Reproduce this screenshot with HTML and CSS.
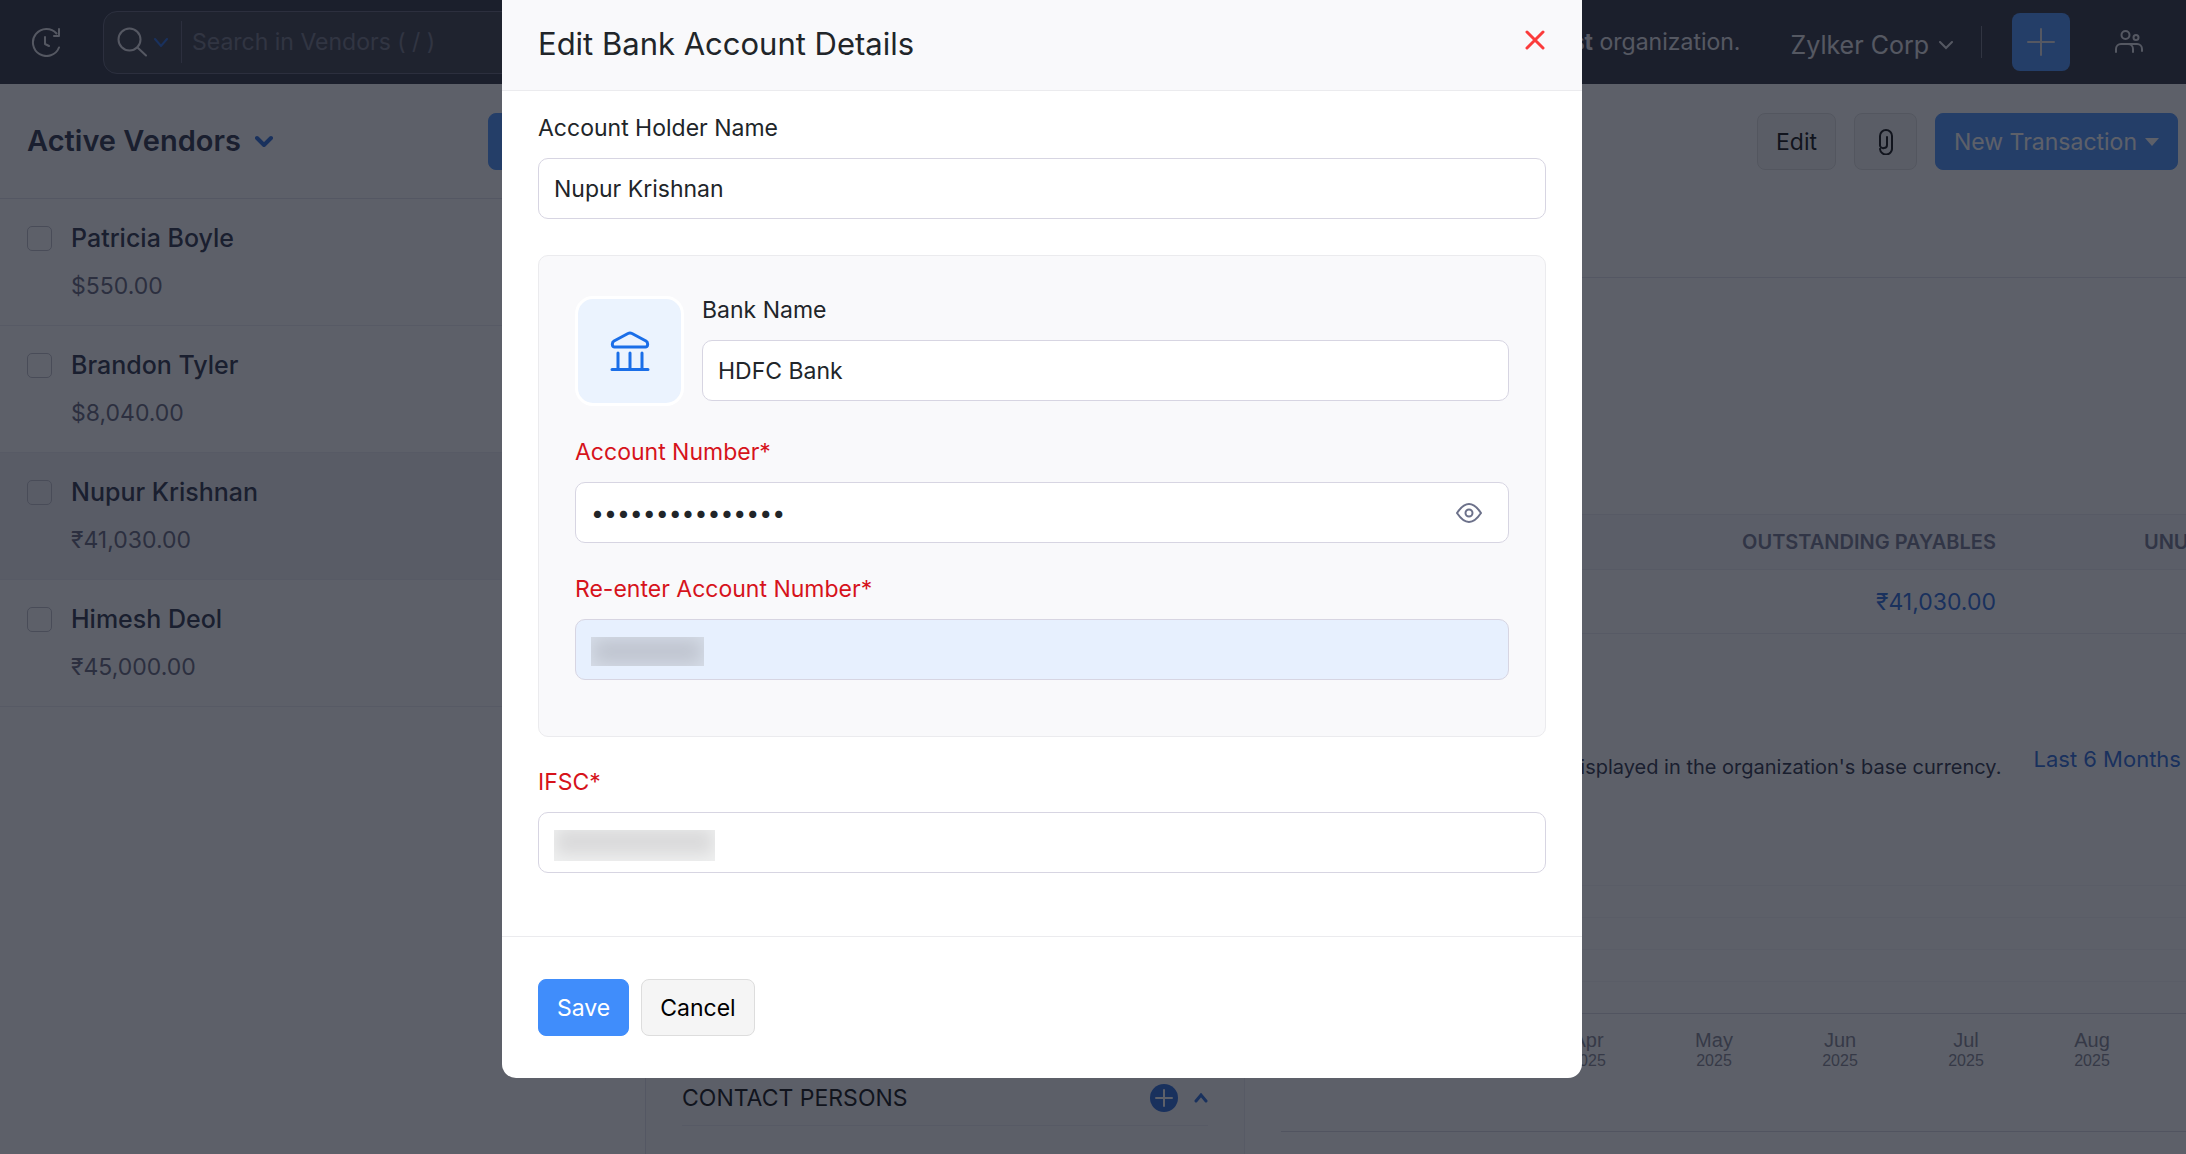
FILE: index.html
```html
<!DOCTYPE html>
<html lang="en">
<head>
    <meta charset="UTF-8">
    <meta name="viewport" content="width=device-width, initial-scale=1.0">
    <title>Edit Bank Account Details</title>
    <link rel="stylesheet" href="styles.css">
</head>
<body>
    <header class="topbar">
        <button class="icon-btn recent" aria-label="Recent history">
            <svg width="30" height="30" viewBox="0 0 30 30" fill="none" stroke="currentColor" stroke-width="2" stroke-linecap="round" stroke-linejoin="round">
                <path d="M28 20.500A13.500 13.500 0 1 1 25.500 6.500"/><path d="M28 2v7h-5M14 10v7l4 2"/>
            </svg>
        </button>
        <div class="search">
            <button class="search-scope" aria-label="Search scope">
                <svg width="30" height="30" viewBox="0 0 30 30" fill="none" stroke="currentColor" stroke-width="2" stroke-linecap="round">
                    <circle cx="12.500" cy="12.500" r="11"/><path d="M20.500 20.500l8.500 8"/>
                </svg>
                <svg class="blue" width="14" height="9" viewBox="0 0 14 9" fill="none" stroke="currentColor" stroke-width="2" stroke-linecap="round">
                    <path d="M1 1l6 7 6-7"/>
                </svg>
            </button>
            <input type="text" class="search-input" placeholder="Search in Vendors ( / )" aria-label="Search in Vendors">
        </div>
        <p class="notice">You are in a <b>test</b> organization.</p>
        <button class="org">Zylker Corp
            <svg width="14" height="9" viewBox="0 0 14 9" fill="none" stroke="currentColor" stroke-width="2" stroke-linecap="round"><path d="M1 1l6 6 6-6"/></svg>
        </button>
        <span class="topbar-line"></span>
        <button class="add" aria-label="Quick create">
            <svg width="28" height="28" viewBox="0 0 28 28" stroke="currentColor" stroke-width="2" stroke-linecap="round"><path d="M14 1v26M1 14h26"/></svg>
        </button>
        <button class="icon-btn users" aria-label="Users">
            <svg width="28" height="24" viewBox="0 0 28 24" fill="none" stroke="currentColor" stroke-width="2" stroke-linecap="round">
                <circle cx="10.500" cy="5" r="4"/><circle cx="21" cy="7.500" r="2.500"/>
                <path d="M1 22v-3a5 5 0 0 1 5-5h7a5 5 0 0 1 5 5v3M14 14h8a5 5 0 0 1 5 5v2"/>
            </svg>
        </button>
    </header>

    <div class="page">
        <aside class="vendors">
            <div class="vendors-head">
                <h2>Active Vendors</h2>
                <svg class="blue" width="18" height="12" viewBox="0 0 18 12" fill="none" stroke="currentColor" stroke-width="4" stroke-linecap="round" stroke-linejoin="round"><path d="M2 3l7 7 7-7"/></svg>
                <button class="btn primary new-vendor" aria-label="New vendor"></button>
            </div>
            <ul class="vendor-list">
                <li>
                    <input type="checkbox" id="v1">
                    <label for="v1">Patricia Boyle</label>
                    <span>$550.00</span>
                </li>
                <li>
                    <input type="checkbox" id="v2">
                    <label for="v2">Brandon Tyler</label>
                    <span>$8,040.00</span>
                </li>
                <li class="active">
                    <input type="checkbox" id="v3">
                    <label for="v3">Nupur Krishnan</label>
                    <span>₹41,030.00</span>
                </li>
                <li>
                    <input type="checkbox" id="v4">
                    <label for="v4">Himesh Deol</label>
                    <span>₹45,000.00</span>
                </li>
            </ul>
        </aside>

        <main class="detail">
            <div class="detail-head">
                <button class="btn">Edit</button>
                <button class="btn attach" aria-label="Attach file">
                    <svg width="14" height="26" viewBox="0 0 14 26" fill="none" stroke="currentColor" stroke-width="2" stroke-linecap="round">
                        <path d="M8 8v8a3 3 0 0 1-3 3 3 3 0 0 1-4-3V7a6 6 0 0 1 12 0v12a6 6 0 0 1-12 1"/>
                    </svg>
                </button>
                <button class="btn primary">New Transaction
                    <svg width="14" height="8" viewBox="0 0 14 8" fill="currentColor"><path d="M0 0h14L7 8z"/></svg>
                </button>
            </div>
            <div class="detail-body">
                <section class="contact">
                    <div class="contact-head">
                        <h3>CONTACT PERSONS</h3>
                        <button class="icon-btn blue" aria-label="Add contact person">
                            <svg width="28" height="28" viewBox="0 0 28 28"><circle cx="14" cy="14" r="14" fill="currentColor"/><path d="M14 6v16M6 14h16" stroke="#fff" stroke-width="2" stroke-linecap="round"/></svg>
                        </button>
                        <button class="icon-btn blue" aria-label="Collapse">
                            <svg width="14" height="10" viewBox="0 0 14 10" fill="none" stroke="currentColor" stroke-width="3" stroke-linecap="round"><path d="M2 8l5-6 5 6"/></svg>
                        </button>
                    </div>
                </section>
                <section class="summary">
                    <table class="payables">
                        <thead>
                            <tr><th>OUTSTANDING PAYABLES</th><th>UNUSED CREDITS</th></tr>
                        </thead>
                        <tbody>
                            <tr><td><a href="#">₹41,030.00</a></td><td></td></tr>
                        </tbody>
                    </table>
                    <div class="chart-head">
                        <p>This chart is displayed in the organization's base currency.</p>
                        <a href="#">Last 6 Months</a>
                    </div>
                    <div class="grid-lines"><i></i><i></i><i></i><i></i></div>
                    <ol class="months">
                        <li>Apr<small>2025</small></li>
                        <li>May<small>2025</small></li>
                        <li>Jun<small>2025</small></li>
                        <li>Jul<small>2025</small></li>
                        <li>Aug<small>2025</small></li>
                    </ol>
                </section>
            </div>
        </main>
    </div>

    <div class="overlay">
        <form class="modal" role="dialog" aria-labelledby="modal-title">
            <div class="modal-head">
                <h1 id="modal-title">Edit Bank Account Details</h1>
                <button type="button" class="icon-btn close" aria-label="Close">
                    <svg width="20" height="20" viewBox="0 0 20 20" stroke="currentColor" stroke-width="3" stroke-linecap="round"><path d="M2 2l16 16M18 2L2 18"/></svg>
                </button>
            </div>
            <div class="modal-body">
                <div class="field">
                    <label for="holder">Account Holder Name</label>
                    <input type="text" id="holder" value="Nupur Krishnan">
                </div>
                <div class="card">
                    <div class="bank">
                        <div class="bank-icon">
                            <svg width="40" height="40" viewBox="0 0 40 40" fill="none" stroke="currentColor" stroke-width="3" stroke-linecap="round" stroke-linejoin="round">
                                <path d="M18 2.500a4.500 4.500 0 0 1 4 0l14 7.500c2.500 1.500 2 6-.500 6h-31c-2.500 0-3-4.500-.500-6zM8 22v16M20 22v16M32 22v16M2 38.500h36"/>
                            </svg>
                        </div>
                        <div class="field">
                            <label for="bank">Bank Name</label>
                            <input type="text" id="bank" value="HDFC Bank">
                        </div>
                    </div>
                    <div class="field required">
                        <label for="number">Account Number*</label>
                        <div class="control">
                            <input type="password" id="number" value="000000000000000">
                            <button type="button" class="icon-btn eye" aria-label="Show account number">
                                <svg width="26" height="20" viewBox="0 0 26 20" fill="none" stroke="currentColor" stroke-width="2" stroke-linejoin="round"><path d="M1 10c4-6 7-9 12-9s8 3 12 9c-4 6-7 9-12 9s-8-3-12-9z"/><circle cx="13" cy="10" r="3.500"/></svg>
                            </button>
                        </div>
                    </div>
                    <div class="field required">
                        <label for="renumber">Re-enter Account Number*</label>
                        <div class="control">
                            <input type="text" id="renumber" class="filled">
                            <span class="mask mask-number"></span>
                        </div>
                    </div>
                </div>
                <div class="field required">
                    <label for="ifsc">IFSC*</label>
                    <div class="control">
                        <input type="text" id="ifsc">
                        <span class="mask mask-ifsc"></span>
                    </div>
                </div>
            </div>
            <div class="modal-foot">
                <button type="submit" class="btn primary">Save</button>
                <button type="button" class="btn">Cancel</button>
            </div>
        </form>
    </div>
</body>
</html>
```

FILE: styles.css
```css
* {
    box-sizing: border-box;
}
body {
    margin: 0;
    height: 100vh;
    display: flex;
    flex-direction: column;
    overflow: hidden;
    font: 23px/36px Inter, sans-serif;
    color: #21263c;
    background: #fff;
}
h1, h2, h3, p, ul, ol {
    margin: 0;
    padding: 0;
    font-weight: 400;
    list-style: none;
}
button, input {
    font: inherit;
    color: inherit;
}
button {
    cursor: pointer;
}
svg {
    display: block;
    flex: none;
}
a {
    color: #1b61d8;
    text-decoration: none;
}
.blue { color: #1b61d8; }
.icon-btn {
    border: none;
    background: none;
    padding: 0;
}
.btn {
    display: flex;
    align-items: center;
    justify-content: center;
    gap: 8px;
    height: 57px;
    padding: 0 18px;
    border: 1px solid #ddd;
    border-radius: 8px;
    background: #f5f5f5;
    color: #000;
    white-space: nowrap;
}
.primary {
    background: #408dfb;
    border-color: #408dfb;
    color: #fff;
}

/* top bar */
.topbar {
    flex: none;
    display: flex;
    align-items: center;
    height: 84px;
    padding: 0 43px 0 31px;
    background: #232532;
    color: #e3e3e8;
}
.search {
    flex: 0 1 700px;
    display: flex;
    align-items: center;
    height: 63px;
    margin-left: 42px;
    border: 1px solid #5a5d70;
    border-radius: 14px;
    background: #31333f;
}
.search-scope {
    display: flex;
    align-items: center;
    gap: 7px;
    height: 42px;
    padding: 0 13px;
    border: none;
    border-right: 1px solid #5a5d70;
    background: none;
}
.search-input {
    flex: 1;
    min-width: 0;
    padding: 0 10px;
    border: none;
    background: none;
}
.search-input::placeholder {
    color: #6c6f7e;
    opacity: 1;
}
.notice {
    margin-left: auto;
    white-space: nowrap;
}
.org {
    display: flex;
    align-items: center;
    gap: 10px;
    margin-left: 50px;
    padding: 6px 0 0;
    border: none;
    background: none;
    font-size: 25px;
    white-space: nowrap;
}
.topbar-line {
    width: 1px;
    height: 32px;
    margin: 0 30px 0 28px;
    background: #6c6f7e;
}
.add {
    display: grid;
    place-items: center;
    width: 58px;
    height: 58px;
    border: none;
    border-radius: 8px;
    background: #408dfb;
}
.users {
    margin-left: 45px;
}

/* vendor list */
.page {
    flex: 1;
    min-height: 0;
    display: flex;
}
.vendors {
    flex: none;
    width: 646px;
    border-right: 1px solid #e2e2ea;
}
.vendors-head {
    display: flex;
    align-items: center;
    gap: 14px;
    height: 115px;
    padding: 0 27px;
    border-bottom: 1px solid #e2e2ea;
}
.vendors-head h2 {
    font-size: 29px;
    font-weight: 600;
}
.new-vendor {
    width: 130px;
    margin-left: auto;
}
.vendor-list li {
    display: grid;
    grid-template-columns: 25px 1fr;
    column-gap: 19px;
    row-gap: 12px;
    align-items: center;
    height: 127px;
    padding: 21px 27px;
    border-bottom: 1px solid #ebeaf2;
}
.vendor-list .active { background: #f1f1f5; }
.vendor-list input {
    appearance: none;
    width: 25px;
    height: 25px;
    margin: 0;
    border: 1px solid #bbbbc6;
    border-radius: 5px;
}
.vendor-list label {
    font-size: 25px;
    font-weight: 500;
}
.vendor-list span {
    grid-column: 2;
    color: #5a5c74;
}

/* vendor detail */
.detail {
    flex: 1;
    min-width: 0;
    display: flex;
    flex-direction: column;
}
.detail-head {
    display: flex;
    justify-content: flex-end;
    gap: 18px;
    height: 194px;
    padding: 29px 8px 0;
    border-bottom: 1px solid #e2e2ea;
}
.attach { width: 63px; }
.detail-body {
    flex: 1;
    min-height: 0;
    display: flex;
}
.contact {
    flex: none;
    display: flex;
    flex-direction: column;
    justify-content: flex-end;
    width: 599px;
    padding: 0 36px 28px;
    border-right: 1px solid #ebeaf2;
    background: #fafafc;
}
.contact-head {
    display: flex;
    align-items: center;
    gap: 16px;
    padding-bottom: 9px;
    border-bottom: 1px solid #ebeaf2;
}
.contact-head h3 {
    flex: 1;
    font-size: 23px;
    color: #000;
}
.summary {
    flex: 1;
    min-width: 0;
    padding: 236px 0 0 36px;
}
.payables {
    width: 100%;
    border-collapse: collapse;
    table-layout: fixed;
    text-align: right;
    white-space: nowrap;
}
.payables th, .payables td {
    padding: 0 0 0 148px;
    border-block: 1px solid #ebeaf2;
}
.payables th {
    height: 55px;
    font-size: 20px;
    font-weight: 600;
    color: #6c718a;
    background: #f7f7fb;
}
.payables td { height: 64px; }
.payables th:first-child, .payables td:first-child {
    width: 79%;
    padding: 0;
}
.payables th:last-child {
    text-align: left;
}
.chart-head {
    display: flex;
    justify-content: flex-end;
    gap: 32px;
    padding: 107px 5px 0 0;
    font-size: 20px;
    white-space: nowrap;
}
.chart-head p { padding-top: 8px; }
.chart-head a { font-size: 22px; }
.grid-lines {
    display: grid;
    grid-auto-rows: 32px;
    margin-top: 100px;
    border-bottom: 1px solid #d8d8e0;
}
.grid-lines i { border-top: 1px solid #f4f4f8; }
.months {
    display: flex;
    justify-content: flex-end;
    padding: 14px 31px 61px 0;
    border-bottom: 1px solid #d8d8e0;
    font: 20px/24px "Liberation Sans", sans-serif;
    color: #7c7e8c;
}
.months li {
    width: 126px;
    text-align: center;
}
.months small {
    display: block;
    font-size: 16px;
    line-height: 18px;
}

/* modal */
.overlay {
    position: fixed;
    inset: 0;
    display: flex;
    justify-content: center;
    align-items: flex-start;
    padding-right: 102px;
    background: rgba(24, 28, 41, 0.7);
}
.modal {
    width: 1080px;
    max-width: 100%;
    border-radius: 0 0 14px 14px;
    background: #fff;
    color: #212529;
}
.modal-head {
    display: flex;
    align-items: center;
    justify-content: space-between;
    height: 91px;
    padding: 0 37px 10px 36px;
    border-bottom: 1px solid #ebebee;
    background: #f9f9fb;
}
.modal-head h1 {
    font-size: 31px;
    padding-top: 8px;
}
.close { color: #fb3b3b; }
.modal-body {
    display: flex;
    flex-direction: column;
    gap: 27px;
    padding: 19px 36px 63px;
    border-bottom: 1px solid #ebebee;
}
.field {
    display: flex;
    flex-direction: column;
    gap: 12px;
    flex: 1;
}
.required label { color: #d6131b; }
.field input {
    width: 100%;
    height: 61px;
    padding: 0 15px;
    border: 1px solid #d7d5e2;
    border-radius: 10px;
    background: #fff;
}
.field .filled { background: #e7f0fe; }
.control { position: relative; }
.card {
    display: flex;
    flex-direction: column;
    gap: 28px;
    margin-top: 9px;
    padding: 36px 36px 56px;
    border: 1px solid #ebebee;
    border-radius: 10px;
    background: #f9f9fb;
}
.bank {
    display: flex;
    align-items: flex-start;
    gap: 18px;
}
.bank-icon {
    display: grid;
    place-items: center;
    width: 109px;
    height: 110px;
    margin-top: 4px;
    border: 3px solid #fff;
    border-radius: 18px;
    background: #ebf3fe;
    color: #1a6ee8;
}
.eye {
    position: absolute;
    right: 27px;
    top: 21px;
    color: #6c718a;
}
.mask {
    position: absolute;
    left: 16px;
    top: 18px;
}
/* hidden values */
.mask-number {
    width: 113px;
    height: 29px;
    background: #bfc4cf;
    box-shadow: inset 0 0 18px 2px #d8dfea;
}
.mask-ifsc {
    width: 161px;
    height: 31px;
    background: #dadadb;
    box-shadow: inset 0 -4px 16px 2px #f0f1f1;
}
.modal-foot {
    display: flex;
    gap: 12px;
    padding: 42px 36px;
}
```
